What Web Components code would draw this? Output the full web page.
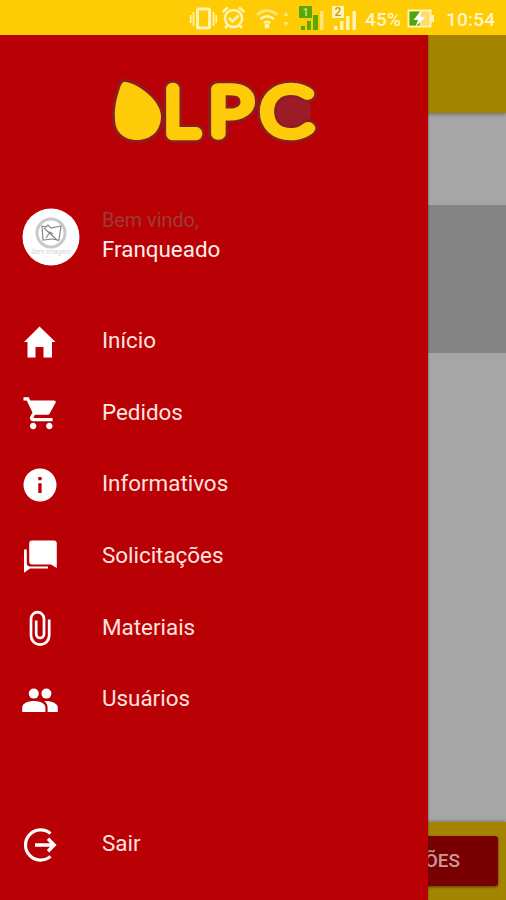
<!DOCTYPE html>
<html lang="pt-BR"><head><meta charset="utf-8"><title>OLPC</title>
<style>
html,body{margin:0;height:100%;overflow:hidden;background:#a6a6a6;font-family:Roboto,"Noto Sans",sans-serif}
</style></head><body>
<olpc-app></olpc-app>
<script>
const define=(name,markup,ready)=>customElements.define(name,class extends HTMLElement{
  constructor(){super();this.attachShadow({mode:'open'}).innerHTML=markup}
  connectedCallback(){if(ready)ready(this,this.shadowRoot)}
});

const icons={
 home:'<path d="M39.5 13.5 55.5 29H52V44.5H43.5V34H35.5V44.5H27.5V29H24Z" transform="translate(-20 -8)"/>',
 cart:'<g transform="translate(0 1) scale(1.667 1.6)"><path d="M7 18c-1.1 0-1.99.9-1.99 2S5.9 22 7 22s2-.9 2-2-.9-2-2-2zM1 2v2h2l3.6 7.59-1.35 2.45c-.16.28-.25.61-.25.96 0 1.1.9 2 2 2h12v-2H7.42c-.14 0-.25-.11-.25-.25l.03-.12.9-1.63h7.45c.75 0 1.41-.41 1.75-1.03l3.58-6.49A1 1 0 0 0 20 4H5.21l-.94-2H1zm16 16c-1.1 0-1.99.9-1.99 2s.89 2 1.99 2 2-.9 2-2-.9-2-2-2z" transform="translate(1.1 0) scale(.97 1)"/></g>',
 info:'<path fill-rule="evenodd" d="M20 4.500a16.500 16.500 0 1 0 0 33a16.500 16.500 0 0 0 0-33M18.300 13h3.300v3.300h-3.300zM18.300 19.300h3.300V29h-3.300z"/>',
 chat:'<path d="M12 4.500H34Q36.800 4.500 36.800 7.500V32L31 28.500H12Q9.200 28.500 9.200 25.500V7.500Q9.200 4.500 12 4.500"/><path d="M4 13.500H6.800V27Q6.800 30.500 10.500 30.500H28V32.500H10L4 36.800Z"/>',
 clip:'<path d="M29.2 11.500V27.500A9.100 9.100 0 0 1 11 27.500V10.700A6.500 6.500 0 0 1 24 10.700V26A3.900 3.900 0 0 1 16.200 26V12.500" fill="none" stroke="#fff" stroke-width="2.700"/>',
 people:'<g transform="translate(-.2 1)"><circle cx="14" cy="13.600" r="5"/><circle cx="26.600" cy="13.600" r="5"/><path d="M2.400 32V27.500C2.400 23 9 21 14 21S25.600 23 25.600 27.500V32Z"/><path d="M24.500 21.200C30 20.500 38 23 38 27.500V32H27.800V27.500C27.800 24.800 26.500 22.700 24.500 21.200Z"/></g>',
 exit:'<g transform="translate(0 1)" fill="none" stroke="#fff"><path d="M30.500 8.600A15.100 15.100 0 1 0 30.500 31.400" stroke-width="3.200"/><path d="M15 20H33M28 13.800L34.200 20L28 26.200" stroke-width="3.400"/></g>'
};

define('app-icon',`<style>:host{display:block;width:40px;height:40px}svg{display:block;fill:#fff}</style><svg width="40" height="40" viewBox="0 0 40 40"></svg>`,
 (el,r)=>r.querySelector('svg').innerHTML=icons[el.getAttribute('name')]);

define('menu-item',`<style>
:host{display:flex;align-items:center;height:71.7px;padding-left:20px;gap:42px;color:#ffe3df;font-size:22.4px;line-height:28px}
span{position:relative;top:-1px}</style><app-icon></app-icon><span><slot></slot></span>`,
 (el,r)=>{const i=document.createElement('app-icon');i.setAttribute('name',el.getAttribute('icon'));r.querySelector('app-icon').replaceWith(i)});

const word='<text transform="translate(165 134)">L</text><text transform="translate(209 134) scale(1.200 1)">P</text><text transform="translate(261.500 134) scale(1.150 1)">C</text>';
define('brand-logo',`<style>:host{display:block;height:90px}svg{display:block}
text{font:100 64px Lato,sans-serif;stroke-linejoin:round;stroke-linecap:round;vector-effect:non-scaling-stroke}
.o{fill:#8c1d22;stroke:#8c1d22;stroke-width:18}.y{fill:#fecb08;stroke:#fecb08;stroke-width:12.500}</style>
<svg width="230" height="90" viewBox="100 65 230 90">
<circle cx="289" cy="111" r="22" fill="#9b1c27"/>
<path d="M126 82C139 84 161 101 161 116C161 131 151 140 137 140C123 140 115 131 115 119C114 108 117 96 121 85Q123 81 126 82Z" fill="#fecb08" stroke="#8c1d22" stroke-width="6" paint-order="stroke"/>
<g class="o" aria-hidden="true">${word}</g><g class="y">${word}</g>
</svg>`);

define('user-card',`<style>:host{display:flex;padding-left:22px;gap:22px;align-items:flex-start;color:#ffece9;font-size:22.4px}
svg{display:block;margin-top:1px}p{margin:0;line-height:28px}.hi{color:#9c3c34;font-size:19.800px;line-height:27px;padding-bottom:1px}</style>
<svg width="58" height="58" viewBox="0 0 58 58"><circle cx="29" cy="29" r="28.5" fill="#fff"/><circle cx="29" cy="25" r="14" fill="none" stroke="#c9c9c9" stroke-width="3"/>
<g fill="none" stroke="#888" stroke-width="1.2"><path d="M20 18l4 1 2-2 3 3 10-2-2 14-7-1-9 1zM22 20l14 13M24 30l4-6 3 2"/></g>
<text x="9" y="46" textLength="40" font-family="Roboto" font-size="7" fill="#d5d5d5">Sem imagem</text></svg>
<div><p class="hi">Bem vindo,</p><p>Franqueado</p></div>`);

define('side-drawer',`<style>
:host{position:absolute;left:0;top:35px;bottom:0;width:428px;background:#b90005;box-shadow:0 0 2px #0007;display:flex;flex-direction:column}
brand-logo{margin:30px 0 0 100px}user-card{margin-top:51.500px}nav{margin-top:39.500px;display:flex;flex-direction:column}.last{margin-top:73.5px}</style>
<brand-logo></brand-logo><user-card></user-card>
<nav><menu-item icon="home">Início</menu-item><menu-item icon="cart">Pedidos</menu-item><menu-item icon="info">Informativos</menu-item><menu-item icon="chat">Solicitações</menu-item><menu-item icon="clip">Materiais</menu-item><menu-item icon="people">Usuários</menu-item><menu-item class="last" icon="exit">Sair</menu-item></nav>`);

define('status-bar',`<style>:host{display:block;height:35px;background:#fecb04;position:relative;z-index:2}svg{display:block}text{font:500 19px Roboto,sans-serif;fill:#fff6c8}</style>
<svg width="506" height="35" viewBox="0 0 506 35"><g fill="none" stroke="#fff3b4" stroke-width="2.5">
<rect x="197.5" y="9" width="12" height="19" rx="1" stroke-width="3"/><path d="M193.5 12V26M213.5 12V26M190.7 15V23M216.2 15V23" stroke-width="1.7"/>
<circle cx="233.5" cy="18.5" r="8.5"/><path d="M222.5 12L228 7.5M239 7.5L244.5 12M228 25L225 28M239 25L242 28M229 18L232.5 21.5L238.5 15.5"/>
<path d="M257 14.8Q267 6.5 277.5 14.8" stroke="#ffe486"/><path d="M260.5 19Q267 13.5 274 19M264 23Q267 20.5 270.5 23"/></g>
<circle cx="267" cy="26" r="2.5" fill="#fff3b4"/><path d="M286 12l2.5 4h-5zM286 26l-2.5-4h5z" fill="#ffe486"/>
<g fill="#58a80a"><rect x="299" y="6" width="13" height="12"/><rect x="301" y="26" width="4" height="4"/><rect x="307" y="21" width="4" height="9"/><rect x="313" y="15" width="5" height="15"/></g><rect x="320" y="11" width="3.5" height="19" fill="#ffe27a"/>
<g fill="#fff3b4"><rect x="332" y="6" width="12" height="12"/><rect x="334" y="26" width="3.5" height="4"/><rect x="340" y="21" width="3.5" height="9"/><rect x="346" y="16" width="3.5" height="14"/><rect x="352.500" y="11" width="3.5" height="19"/></g>
<text x="302.5" y="16" style="font-size:11px;fill:#d9ec6b">1</text><text x="334.500" y="16.300" style="font-size:12px;fill:#c99b1c">2</text>
<text x="365" y="26" textLength="36">45%</text><rect x="408.500" y="10.500" width="22" height="16" fill="#ffdc66" stroke="#fff3b4" stroke-width="2"/><rect x="409.500" y="11.500" width="10" height="14" fill="#4aa80c"/><rect x="431" y="15" width="3" height="7" fill="#fff3b4"/><path d="M421 10.500L413.500 20H418L415.500 26.500L425.500 17H420.500Z" fill="#fff"/>
<text x="446" y="26" textLength="49">10:54</text></svg>`);

define('home-page',`<style>:host{flex:1;display:flex;flex-direction:column;background:#a6a6a6}
header{height:78px;background:#a58500;box-shadow:0 1px 4px #0006}.banner{margin-top:92px;height:148px;background:#848484}
footer{margin-top:auto;height:78px;background:#a58500;box-shadow:0 -1px 3px #0004;display:flex;justify-content:flex-end;padding:14px 8px 0;box-sizing:border-box}
button{all:unset;box-sizing:border-box;width:240px;height:50px;padding-right:38px;text-align:right;border-radius:3px;background:#790002;box-shadow:0 1px 3px #0008;color:#c99a98;font-size:19px;font-weight:500;line-height:48px}</style>
<header></header><div class="banner"></div><footer><button>SOLICITAÇÕES</button></footer>`);

define('olpc-app',`<style>:host{display:flex;flex-direction:column;width:506px;height:900px;position:relative;overflow:hidden}</style>
<status-bar></status-bar><home-page></home-page><side-drawer></side-drawer>`);
</script></body></html>
